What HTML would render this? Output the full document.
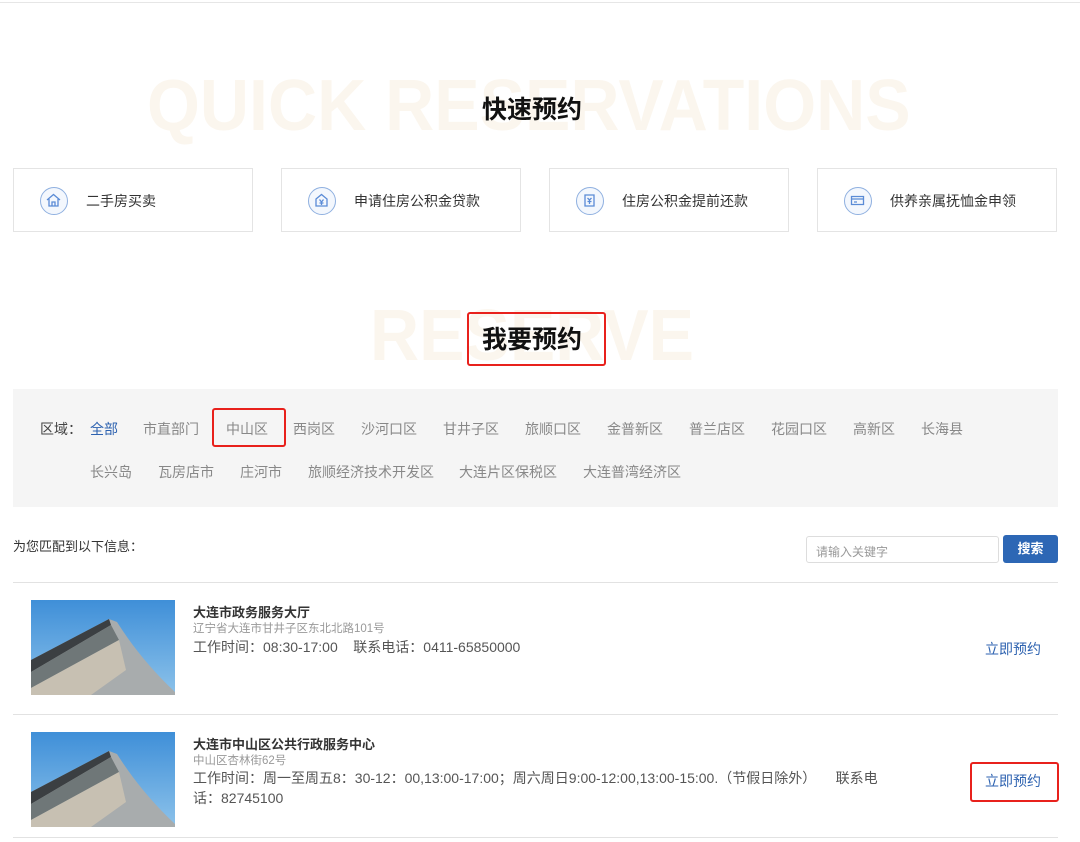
<!DOCTYPE html>
<html><head><meta charset="utf-8"><style>
*{margin:0;padding:0;box-sizing:border-box}
body{width:1080px;height:842px;background:#fff;position:relative;overflow:hidden;font-family:"Liberation Sans","Noto Sans CJK SC",sans-serif;color:#333}
.a{position:absolute;white-space:nowrap}
.wm{position:absolute;font-weight:bold;color:#fbf6ee;font-size:72px;line-height:1;transform-origin:0 0;transform:scaleX(0.945)}
.h{font-size:25px;font-weight:bold;color:#111}
.card{position:absolute;top:168px;width:240px;height:64px;border:1px solid #e4e4e4;background:#fff}
.card .ic{position:absolute;left:26px;top:18px;width:28px;height:28px;border:1.5px solid #8fb0e0;border-radius:50%;background:#f3f7fd}
.card .t{position:absolute;left:72px;top:22px;font-size:14px;color:#333}
.f{position:absolute;font-size:14px;color:#888}
.img{position:absolute;left:31px;width:144px;height:95px}
.ti{font-size:13px;font-weight:bold;color:#333}
.ad{font-size:11.5px;color:#999}
.tm{font-size:14px;color:#555}
.bk{color:#2d62b0;font-size:14px}
.line{position:absolute;left:13px;width:1045px;height:1px;background:#e2e2e2}
.red{position:absolute;border:2.5px solid #e8211c;border-radius:3px}
</style></head><body>
<div class="a" style="left:0;top:2px;width:1080px;height:1px;background:#e6e6e6"></div>
<div class="wm" style="left:147px;top:70px">QUICK RESERVATIONS</div>
<div class="a h" style="left:482px;top:90px">快速预约</div>

<div class="card" style="left:13px"><div class="ic"><svg width="25" height="25" viewBox="0 0 25 25"><path d="M6 12 L12.5 6.5 L19 12 M8 11 V18 H17 V11 M11 18 V14 H14 V18" fill="none" stroke="#5a8bd6" stroke-width="1.3"/></svg></div><div class="t">二手房买卖</div></div>
<div class="card" style="left:281px"><div class="ic"><svg width="25" height="25" viewBox="0 0 25 25"><path d="M7 11 L12.5 6.5 L18 11 V18 H7 Z M10.5 11.5 L12.5 14 L14.5 11.5 M12.5 14 V17 M10.5 15 H14.5" fill="none" stroke="#5a8bd6" stroke-width="1.3"/></svg></div><div class="t">申请住房公积金贷款</div></div>
<div class="card" style="left:549px"><div class="ic"><svg width="25" height="25" viewBox="0 0 25 25"><path d="M8 7 H17 V18 H8 Z M10.5 10 L12.5 12 L14.5 10 M12.5 12 V16 M10.5 13.5 H14.5" fill="none" stroke="#5a8bd6" stroke-width="1.3"/></svg></div><div class="t">住房公积金提前还款</div></div>
<div class="card" style="left:817px"><div class="ic"><svg width="25" height="25" viewBox="0 0 25 25"><path d="M6.5 8.5 H18.5 V16.5 H6.5 Z M6.5 11 H18.5 M9 14 H12" fill="none" stroke="#5a8bd6" stroke-width="1.3"/></svg></div><div class="t">供养亲属抚恤金申领</div></div>

<div class="wm" style="left:370px;top:300px">RESERVE</div>
<div class="a h" style="left:482px;top:320px">我要预约</div>
<div class="red" style="left:467px;top:312px;width:139px;height:54px"></div>

<div class="a" style="left:13px;top:389px;width:1045px;height:118px;background:#f5f5f5"></div>
<div class="f" style="left:40px;top:419px;color:#444">区域：</div>
<div class="f" style="left:90px;top:419px;color:#2d62b0">全部</div>
<div class="f" style="left:143px;top:419px">市直部门</div>
<div class="f" style="left:226px;top:419px">中山区</div>
<div class="f" style="left:293px;top:419px">西岗区</div>
<div class="f" style="left:361px;top:419px">沙河口区</div>
<div class="f" style="left:443px;top:419px">甘井子区</div>
<div class="f" style="left:525px;top:419px">旅顺口区</div>
<div class="f" style="left:607px;top:419px">金普新区</div>
<div class="f" style="left:689px;top:419px">普兰店区</div>
<div class="f" style="left:771px;top:419px">花园口区</div>
<div class="f" style="left:853px;top:419px">高新区</div>
<div class="f" style="left:921px;top:419px">长海县</div>
<div class="f" style="left:90px;top:462px">长兴岛</div>
<div class="f" style="left:158px;top:462px">瓦房店市</div>
<div class="f" style="left:240px;top:462px">庄河市</div>
<div class="f" style="left:308px;top:462px">旅顺经济技术开发区</div>
<div class="f" style="left:459px;top:462px">大连片区保税区</div>
<div class="f" style="left:583px;top:462px">大连普湾经济区</div>
<div class="red" style="left:212px;top:408px;width:74px;height:39px"></div>

<div class="a" style="left:13px;top:536px;font-size:13px;color:#333">为您匹配到以下信息：</div>
<div class="a" style="left:806px;top:536px;width:193px;height:27px;border:1px solid #ddd;border-radius:3px;background:#fff;font-size:12px;color:#999;padding:6px 9px">请输入关键字</div>
<div class="a" style="left:1003px;top:535px;width:55px;height:28px;background:#2d67b5;border-radius:3px;color:#fff;font-size:13px;font-weight:bold;text-align:center;line-height:28px">搜索</div>
<div class="line" style="top:582px"></div>

<svg class="img" style="top:600px" viewBox="0 0 144 95" preserveAspectRatio="none"><defs><linearGradient id="g" x1="0" y1="0" x2="0" y2="1"><stop offset="0" stop-color="#3f8fd8"/><stop offset="1" stop-color="#8cc2ea"/></linearGradient></defs><rect width="144" height="95" fill="url(#g)"/><path d="M0 60 L78 19 L86 22 Q110 60 144 92 V95 H0Z" fill="#a8acad"/><path d="M0 60 L78 19 L80 25 L0 72Z" fill="#3b3f42"/><path d="M0 72 L80 25 L88 40 L0 88Z" fill="#6f7778"/><path d="M0 88 L88 40 L95 70 L60 95 H0Z" fill="#c7c0b2"/></svg>
<div class="a ti" style="left:193px;top:602px">大连市政务服务大厅</div>
<div class="a ad" style="left:193px;top:620px">辽宁省大连市甘井子区东北北路101号</div>
<div class="a tm" style="left:193px;top:637px">工作时间：08:30-17:00&nbsp;&nbsp;&nbsp;&nbsp;联系电话：0411-65850000</div>
<div class="a bk" style="left:985px;top:639px">立即预约</div>
<div class="line" style="top:714px"></div>

<svg class="img" style="top:732px" viewBox="0 0 144 95" preserveAspectRatio="none"><rect width="144" height="95" fill="url(#g)"/><path d="M0 60 L78 19 L86 22 Q110 60 144 92 V95 H0Z" fill="#a8acad"/><path d="M0 60 L78 19 L80 25 L0 72Z" fill="#3b3f42"/><path d="M0 72 L80 25 L88 40 L0 88Z" fill="#6f7778"/><path d="M0 88 L88 40 L95 70 L60 95 H0Z" fill="#c7c0b2"/></svg>
<div class="a ti" style="left:193px;top:734px">大连市中山区公共行政服务中心</div>
<div class="a ad" style="left:193px;top:752px">中山区杏林街62号</div>
<div class="a tm" style="left:193px;top:768px">工作时间：周一至周五8：30-12：00,13:00-17:00；周六周日9:00-12:00,13:00-15:00.（节假日除外）&nbsp;&nbsp;&nbsp;&nbsp;&nbsp;联系电</div>
<div class="a tm" style="left:193px;top:788px">话：82745100</div>
<div class="a bk" style="left:985px;top:771px">立即预约</div>
<div class="red" style="left:970px;top:762px;width:89px;height:40px"></div>
<div class="line" style="top:837px"></div>
</body></html>
